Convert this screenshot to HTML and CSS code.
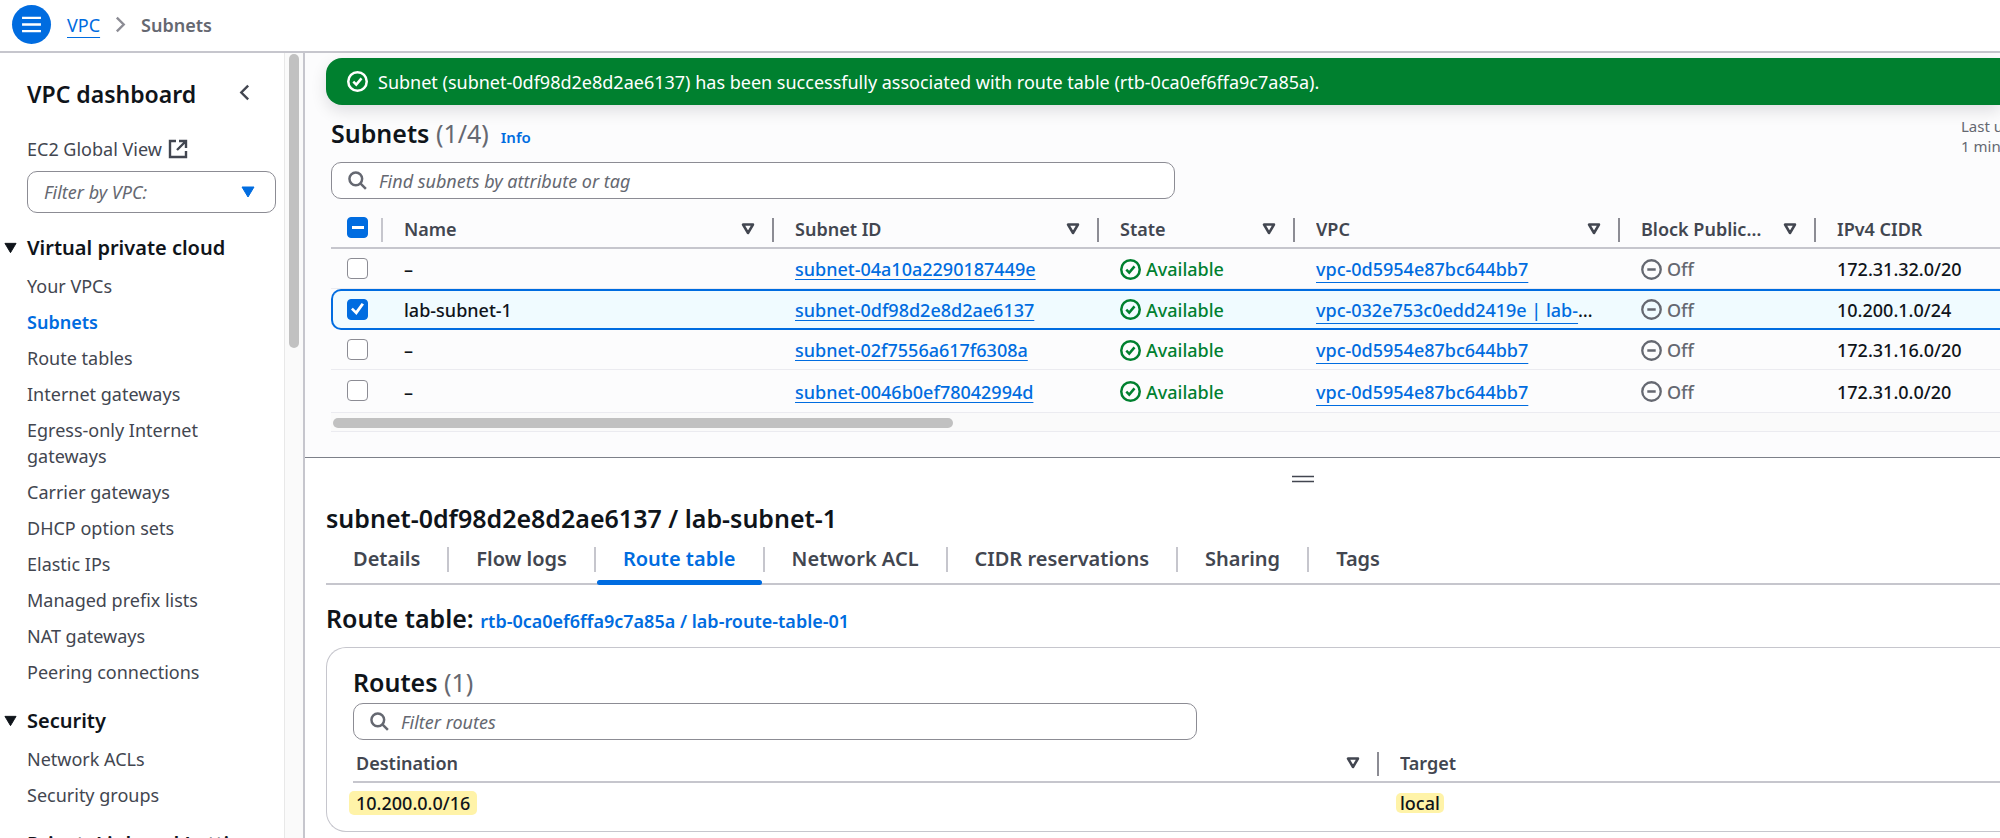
FILE: index.html
```html
<!DOCTYPE html>
<html lang="en">
<head>
<meta charset="utf-8">
<meta name="viewport" content="width=device-width, initial-scale=1">
<title>Subnets | VPC Console</title>
<link rel="stylesheet" href="styles.css">
</head>
<body>
<svg class="sprite" aria-hidden="true">
  <symbol id="check-circle" viewBox="0 0 20 20"><circle cx="10" cy="10" r="8.8" fill="none" stroke="currentColor" stroke-width="2.4"/><path d="M6 10.2l2.8 2.8 5-6" fill="none" stroke="currentColor" stroke-width="2.4"/></symbol>
  <symbol id="minus-circle" viewBox="0 0 20 20"><circle cx="10" cy="10" r="8.8" fill="none" stroke="currentColor" stroke-width="2.2"/><path d="M6 10h8" stroke="currentColor" stroke-width="2.4"/></symbol>
  <symbol id="sort" viewBox="0 0 14 12"><path d="M2 1.5h10L7 10z" fill="none" stroke="currentColor" stroke-width="2.5" stroke-linejoin="round"/></symbol>
  <symbol id="caret" viewBox="0 0 14 12"><path d="M1 1h12L7 11z" fill="currentColor" stroke="currentColor" stroke-width="1" stroke-linejoin="round"/></symbol>
  <symbol id="search" viewBox="0 0 20 20"><circle cx="8.2" cy="8.2" r="6.7" fill="none" stroke="currentColor" stroke-width="2.6"/><path d="M13 13l5.8 5.8" stroke="currentColor" stroke-width="2.6"/></symbol>
</svg>
<header class="topbar">
  <button class="menu-button" type="button" aria-label="Open navigation">
    <svg class="menu-icon" viewBox="0 0 20 18"><path d="M0 2h20M0 9h20M0 16h20" stroke="currentColor" stroke-width="2.5"/></svg>
  </button>
  <nav class="breadcrumbs" aria-label="Breadcrumb">
    <a class="crumb-link" href="#vpc">VPC</a>
    <svg class="crumb-arrow" viewBox="0 0 12 18"><path d="M2 1.5L9.5 9 2 16.5" fill="none" stroke="currentColor" stroke-width="2.6"/></svg>
    <span class="crumb-current">Subnets</span>
  </nav>
</header>
<div class="shell">
  <aside class="sidebar">
    <div class="sidebar-body">
      <div class="sidebar-head">
        <h2 class="sidebar-title">VPC dashboard</h2>
        <button class="icon-button" type="button" aria-label="Close navigation">
          <svg class="back-icon" viewBox="0 0 12 18"><path d="M10 1.5L2.5 9l7.5 7.5" fill="none" stroke="currentColor" stroke-width="2.6"/></svg>
        </button>
      </div>
      <a class="nav-link global-link" href="#global">EC2 Global View
        <svg class="external-icon" viewBox="0 0 20 20"><path d="M8 2H2v16h16v-6M11 2h7v7M18 2L9 11" fill="none" stroke="currentColor" stroke-width="2.4"/></svg>
      </a>
      <div class="select-wrap">
        <select class="select" aria-label="Filter by VPC"><option>Filter by VPC:</option></select>
        <svg class="select-caret"><use href="#caret"/></svg>
      </div>
      <section class="nav-group">
        <h3 class="group-title"><button class="group-button" type="button" aria-expanded="true"><svg class="group-caret"><use href="#caret"/></svg>Virtual private cloud</button></h3>
        <ul class="nav-list">
          <li><a class="nav-link" href="#vpcs">Your VPCs</a></li>
          <li><a class="nav-link active" href="#subnets">Subnets</a></li>
          <li><a class="nav-link" href="#routes">Route tables</a></li>
          <li><a class="nav-link" href="#igw">Internet gateways</a></li>
          <li><a class="nav-link" href="#eigw">Egress-only Internet gateways</a></li>
          <li><a class="nav-link" href="#cgw">Carrier gateways</a></li>
          <li><a class="nav-link" href="#dhcp">DHCP option sets</a></li>
          <li><a class="nav-link" href="#eip">Elastic IPs</a></li>
          <li><a class="nav-link" href="#prefix">Managed prefix lists</a></li>
          <li><a class="nav-link" href="#nat">NAT gateways</a></li>
          <li><a class="nav-link" href="#peering">Peering connections</a></li>
        </ul>
      </section>
      <section class="nav-group">
        <h3 class="group-title"><button class="group-button" type="button" aria-expanded="true"><svg class="group-caret"><use href="#caret"/></svg>Security</button></h3>
        <ul class="nav-list">
          <li><a class="nav-link" href="#acl">Network ACLs</a></li>
          <li><a class="nav-link" href="#sg">Security groups</a></li>
        </ul>
      </section>
      <section class="nav-group">
        <h3 class="group-title"><button class="group-button" type="button" aria-expanded="true"><svg class="group-caret"><use href="#caret"/></svg>PrivateLink and Lattice</button></h3>
      </section>
    </div>
    <div class="side-track"><div class="side-thumb"></div></div>
  </aside>
  <main class="main">
    <section class="list-pane">
      <div class="flash" role="status">
        <svg class="icon"><use href="#check-circle"/></svg>
        <span>Subnet (subnet-0df98d2e8d2ae6137) has been successfully associated with route table (rtb-0ca0ef6ffa9c7a85a).</span>
      </div>
      <div class="list-content">
        <div class="list-head">
          <h1 class="heading">Subnets <span class="count">(1/4)</span></h1>
          <a class="info" href="#info">Info</a>
          <div class="updated">Last updated<br>1 minute ago</div>
        </div>
        <label class="search">
          <svg class="search-icon"><use href="#search"/></svg>
          <input class="search-input" type="search" placeholder="Find subnets by attribute or tag" aria-label="Find subnets by attribute or tag">
        </label>
        <div class="table-wrap">
          <table class="table subnets">
            <colgroup><col class="c-check"><col class="c-name"><col class="c-wide"><col class="c-narrow"><col class="c-wide"><col class="c-narrow"><col class="c-last"></colgroup>
            <thead>
              <tr>
                <th class="check-cell"><input class="checkbox mixed" type="checkbox" aria-label="Select all"></th>
                <th><div class="th-inner"><span class="th-text">Name</span><button class="sort-button" type="button" aria-label="Sort by name"><svg class="sort-icon"><use href="#sort"/></svg></button></div></th>
                <th><div class="th-inner"><span class="th-text">Subnet ID</span><button class="sort-button" type="button" aria-label="Sort by subnet ID"><svg class="sort-icon"><use href="#sort"/></svg></button></div></th>
                <th><div class="th-inner"><span class="th-text">State</span><button class="sort-button" type="button" aria-label="Sort by state"><svg class="sort-icon"><use href="#sort"/></svg></button></div></th>
                <th><div class="th-inner"><span class="th-text">VPC</span><button class="sort-button" type="button" aria-label="Sort by VPC"><svg class="sort-icon"><use href="#sort"/></svg></button></div></th>
                <th><div class="th-inner"><span class="th-text">Block Public&hellip;</span><button class="sort-button" type="button" aria-label="Sort by block public access"><svg class="sort-icon"><use href="#sort"/></svg></button></div></th>
                <th><div class="th-inner"><span class="th-text">IPv4 CIDR</span></div></th>
              </tr>
            </thead>
            <tbody>
              <tr>
                <td class="check-cell"><input class="checkbox" type="checkbox" aria-label="Select subnet-04a10a2290187449e"></td>
                <td>–</td>
                <td><a class="link" href="#s1">subnet-04a10a2290187449e</a></td>
                <td><span class="status ok"><svg class="icon"><use href="#check-circle"/></svg>Available</span></td>
                <td><a class="link low" href="#v1">vpc-0d5954e87bc644bb7</a></td>
                <td><span class="status off"><svg class="icon"><use href="#minus-circle"/></svg>Off</span></td>
                <td>172.31.32.0/20</td>
              </tr>
              <tr class="selected">
                <td class="check-cell"><input class="checkbox" type="checkbox" checked aria-label="Select lab-subnet-1"></td>
                <td>lab-subnet-1</td>
                <td><a class="link" href="#s2">subnet-0df98d2e8d2ae6137</a></td>
                <td><span class="status ok"><svg class="icon"><use href="#check-circle"/></svg>Available</span></td>
                <td><a class="link low" href="#v2">vpc-032e753c0edd2419e | lab-vpc</a></td>
                <td><span class="status off"><svg class="icon"><use href="#minus-circle"/></svg>Off</span></td>
                <td>10.200.1.0/24</td>
              </tr>
              <tr>
                <td class="check-cell"><input class="checkbox" type="checkbox" aria-label="Select subnet-02f7556a617f6308a"></td>
                <td>–</td>
                <td><a class="link" href="#s3">subnet-02f7556a617f6308a</a></td>
                <td><span class="status ok"><svg class="icon"><use href="#check-circle"/></svg>Available</span></td>
                <td><a class="link low" href="#v1">vpc-0d5954e87bc644bb7</a></td>
                <td><span class="status off"><svg class="icon"><use href="#minus-circle"/></svg>Off</span></td>
                <td>172.31.16.0/20</td>
              </tr>
              <tr>
                <td class="check-cell"><input class="checkbox" type="checkbox" aria-label="Select subnet-0046b0ef78042994d"></td>
                <td>–</td>
                <td><a class="link" href="#s4">subnet-0046b0ef78042994d</a></td>
                <td><span class="status ok"><svg class="icon"><use href="#check-circle"/></svg>Available</span></td>
                <td><a class="link low" href="#v1">vpc-0d5954e87bc644bb7</a></td>
                <td><span class="status off"><svg class="icon"><use href="#minus-circle"/></svg>Off</span></td>
                <td>172.31.0.0/20</td>
              </tr>
            </tbody>
          </table>
        </div>
        <div class="h-track"><div class="h-thumb"></div></div>
      </div>
    </section>
    <section class="detail-pane">
      <button class="resize-handle" type="button" aria-label="Resize panel"><svg class="handle-icon" viewBox="0 0 22 8"><path d="M0 1.5h22M0 6.5h22" stroke="currentColor" stroke-width="1.6"/></svg></button>
      <h2 class="heading detail-title">subnet-0df98d2e8d2ae6137 / lab-subnet-1</h2>
      <div class="tabs" role="tablist">
        <button class="tab" type="button" role="tab">Details</button>
        <button class="tab" type="button" role="tab">Flow logs</button>
        <button class="tab current" type="button" role="tab" aria-selected="true">Route table</button>
        <button class="tab" type="button" role="tab">Network ACL</button>
        <button class="tab" type="button" role="tab">CIDR reservations</button>
        <button class="tab" type="button" role="tab">Sharing</button>
        <button class="tab" type="button" role="tab">Tags</button>
      </div>
      <h3 class="heading route-title">Route table: <a class="route-link" href="#rtb">rtb-0ca0ef6ffa9c7a85a / lab-route-table-01</a></h3>
      <div class="card">
        <h3 class="heading card-title">Routes <span class="count">(1)</span></h3>
        <label class="search">
          <svg class="search-icon"><use href="#search"/></svg>
          <input class="search-input" type="search" placeholder="Filter routes" aria-label="Filter routes">
        </label>
        <table class="table routes">
          <colgroup><col class="c-dest"><col></colgroup>
          <thead>
            <tr>
              <th><div class="th-inner"><span class="th-text">Destination</span><button class="sort-button" type="button" aria-label="Sort by destination"><svg class="sort-icon"><use href="#sort"/></svg></button></div></th>
              <th><div class="th-inner"><span class="th-text">Target</span></div></th>
            </tr>
          </thead>
          <tbody>
            <tr><td><mark class="mark">10.200.0.0/16</mark></td><td><mark class="mark small">local</mark></td></tr>
          </tbody>
        </table>
      </div>
    </section>
  </main>
</div>
</body>
</html>
```
FILE: styles.css
```css
* { box-sizing: border-box; }
body {
  margin: 0;
  height: 100vh;
  display: flex;
  flex-direction: column;
  overflow: hidden;
  background: #fff;
  color: #0f141a;
  font-family: "Noto Sans", "Open Sans", sans-serif;
  font-size: 18px;
  line-height: 26px;
}
h1, h2, h3, ul { margin: 0; padding: 0; }
ul { list-style: none; }
button { border: 0; padding: 0; background: none; color: inherit; font: inherit; cursor: pointer; }
a { color: #006ce0; }
svg { display: block; flex: none; }
.sprite { position: absolute; width: 0; height: 0; }
.icon { width: 21px; height: 21px; }

/* Top bar */
.topbar {
  flex: none;
  display: flex;
  align-items: center;
  gap: 16px;
  height: 53px;
  padding: 0 12px 2px;
  border-bottom: 2px solid #c6c6cd;
}
.menu-button {
  display: flex;
  align-items: center;
  justify-content: center;
  width: 39px;
  height: 39px;
  border-radius: 50%;
  background: #006ce0;
  color: #fff;
}
.menu-icon { width: 19px; height: 17px; }
.breadcrumbs { display: flex; align-items: center; gap: 15px; }
.crumb-link { text-underline-offset: 5px; text-decoration-thickness: 1px; }
.crumb-arrow { width: 11px; height: 17px; color: #8c8c94; }
.crumb-current { font-weight: 600; color: #656871; }

/* Navigation */
.shell { flex: 1; min-height: 0; display: flex; }
.sidebar {
  flex: none;
  display: flex;
  width: 305px;
  overflow: hidden;
  border-right: 2px solid #c6c6cd;
}
.sidebar-body { flex: 1; min-width: 0; padding: 25px 8px 0 27px; }
.sidebar-head {
  display: flex;
  align-items: center;
  justify-content: space-between;
  margin-bottom: 26px;
  padding-right: 26px;
}
.sidebar-title { font-size: 23px; line-height: 32px; font-weight: 600; }
.icon-button { padding-bottom: 4px; color: #424650; }
.back-icon { width: 11px; height: 17px; }
.nav-link { color: #424650; text-decoration: none; }
.nav-link.active { color: #006ce0; font-weight: 600; }
.global-link { display: flex; align-items: center; gap: 6px; }
.external-icon { width: 20px; height: 20px; }
.select-wrap { position: relative; margin: 9px 0 21px; }
.select {
  appearance: none;
  display: block;
  width: 100%;
  height: 42px;
  padding: 0 16px;
  border: 1px solid #8c8c94;
  border-radius: 10px;
  background: #fff;
  color: #656871;
  font: inherit;
  font-style: italic;
}
.select-caret { position: absolute; top: 15px; right: 21px; width: 14px; height: 12px; color: #006ce0; pointer-events: none; }
.nav-group { margin-bottom: 22px; }
.group-title { margin-left: -23px; font-size: 20px; line-height: 28px; }
.group-button { display: flex; align-items: center; gap: 10px; font-weight: 600; white-space: nowrap; }
.group-caret { width: 13px; height: 12px; }
.nav-list { display: grid; gap: 10px; margin-top: 11px; }
.side-track { flex: none; width: 19px; padding: 1px 4px; border-left: 1px solid #e8e8e8; background: #fafafa; }
.side-thumb { width: 10px; height: 294px; border-radius: 5px; background: #c1c1c1; }

/* Subnet list */
.main { flex: 1; min-width: 0; display: flex; flex-direction: column; }
.list-pane { padding: 5px 0 25px 21px; background: #fcfcfd; border-bottom: 1px solid #7d8089; }
.flash {
  display: flex;
  align-items: center;
  gap: 10px;
  height: 47px;
  padding: 0 21px;
  border-radius: 16px 0 0 16px;
  background: #00802f;
  color: #fff;
  box-shadow: 0 6px 16px rgba(0, 7, 22, 0.12);
}
.list-content { padding-left: 5px; }
.list-head { display: flex; align-items: baseline; height: 57px; padding-top: 11px; }
.heading { font-size: 25px; line-height: 34px; font-weight: 600; }
.count { color: #656871; font-weight: 400; }
.info { margin-left: 12px; font-size: 15px; font-weight: 600; text-decoration: none; }
.updated { margin-left: auto; width: 39px; align-self: flex-start; white-space: nowrap; font-size: 15px; line-height: 20px; color: #656871; }
.search {
  display: flex;
  align-items: center;
  gap: 12px;
  width: 100%;
  max-width: 844px;
  height: 37px;
  padding: 0 16px;
  border: 1px solid #8c8c94;
  border-radius: 10px;
  background: #fff;
}
.search-icon { width: 19px; height: 19px; color: #656871; }
.search-input { flex: 1; min-width: 0; height: 26px; padding: 0; border: 0; outline: 0; background: none; font: inherit; }
.search-input::placeholder { color: #656871; font-style: italic; opacity: 1; }
.table-wrap { margin-top: 12px; overflow: hidden; }
.table { width: 100%; table-layout: fixed; border-collapse: separate; border-spacing: 0; }
.subnets { min-width: 1669px; }
.c-check { width: 52px; }
.c-name { width: 391px; }
.c-wide { width: 325px; }
.c-narrow { width: 196px; }
th { height: 38px; padding: 0; text-align: left; font-weight: 600; color: #424650; border-bottom: 2px solid #c6c6cd; vertical-align: top; }
.th-inner {
  display: flex;
  align-items: center;
  height: 36px;
  padding: 0 19px 0 21px;
  background: linear-gradient(#8c8c94, #8c8c94) right 7px / 2px 24px no-repeat;
}
th:last-child .th-inner { background: none; }
.th-text { flex: 1; min-width: 0; overflow: hidden; text-overflow: ellipsis; white-space: nowrap; }
.sort-button { margin-left: 12px; }
.sort-icon { width: 14px; height: 12px; }
td { height: 40px; padding: 1px 26px 0 21px; overflow: hidden; text-overflow: ellipsis; white-space: nowrap; border-bottom: 1px solid #ebebf0; }
.subnets td { font-weight: 500; }
.subnets tr:last-child td { height: 43px; }
th.check-cell { padding: 6px 0 0 16px; background: linear-gradient(#c6c6cd, #c6c6cd) right 7px / 2px 24px no-repeat; }
td.check-cell { padding: 0 0 1px 16px; }
.checkbox {
  appearance: none;
  display: block;
  width: 21px;
  height: 21px;
  margin: 0;
  border: 1px solid #8c8c94;
  border-radius: 4px;
  background: #fff;
}
.checkbox:checked, .checkbox.mixed { display: grid; place-items: center; border-color: #006ce0; background: #006ce0; }
.checkbox:checked::before { content: ""; width: 13px; height: 12px; background: #fff; clip-path: polygon(0 55%, 14% 40%, 38% 64%, 82% 0, 100% 12%, 42% 100%); }
.mixed::before { content: ""; width: 12px; height: 3px; background: #fff; }
.selected td { height: 41px; background: #f0fbff; border-top: 2px solid #006ce0; border-bottom: 2px solid #006ce0; padding-top: 0; }
.selected td:first-child { border-left: 2px solid #006ce0; padding-left: 14px; border-radius: 10px 0 0 10px; }
.link { text-decoration-thickness: 1px; text-underline-offset: 3px; text-decoration-skip-ink: none; }
.link.low { text-underline-offset: 6px; }
.status { display: flex; align-items: center; gap: 5px; }
.ok { color: #00802f; }
.off { color: #656871; }
.h-track { height: 19px; padding: 5px 2px; border-bottom: 1px solid #ebebf0; background: #fafafa; }
.h-thumb { width: 620px; height: 10px; border-radius: 5px; background: #c1c1c1; }

/* Details panel */
.detail-pane { flex: 1; padding-left: 21px; }
.resize-handle { display: block; margin: 17px 0 0 966px; color: #424650; }
.handle-icon { width: 22px; height: 8px; }
.detail-title { margin-top: 18px; }
.tabs { display: flex; height: 48px; margin-top: 2px; padding-top: 8px; border-bottom: 2px solid #c6c6cd; }
.tab { position: relative; height: 40px; padding: 0 29px 12px 27px; font-size: 20px; font-weight: 600; color: #424650; }
.tab:not(:last-child) { background: linear-gradient(#c6c6cd, #c6c6cd) right 2px / 2px 25px no-repeat; }
.tab.current { color: #006ce0; }
.tab.current::after { content: ""; position: absolute; left: 1px; right: 3px; bottom: 0; height: 5px; border-radius: 3px; background: #006ce0; }
.route-title { margin-top: 16px; }
.route-link { font-size: 18px; text-decoration: none; }
.card { margin-top: 9px; padding: 17px 0 8px 26px; border: 1px solid #c6c6cd; border-right: 0; border-radius: 20px 0 0 20px; }
.card .search { margin-top: 4px; }
.routes { margin-top: 5px; }
.c-dest { width: 1026px; }
.routes th:first-child .th-inner, .routes td:first-child { padding-left: 3px; }
.routes td { height: 40px; padding-top: 0; border: 0; overflow: visible; font-weight: 500; }
.mark { display: inline-block; margin: 0 -7px; padding: 0 7px; border-radius: 5px; background: #fff3a8; line-height: 24px; color: inherit; }
.mark.small { margin: 0 -4px; padding: 0 4px; line-height: 20px; }
```
